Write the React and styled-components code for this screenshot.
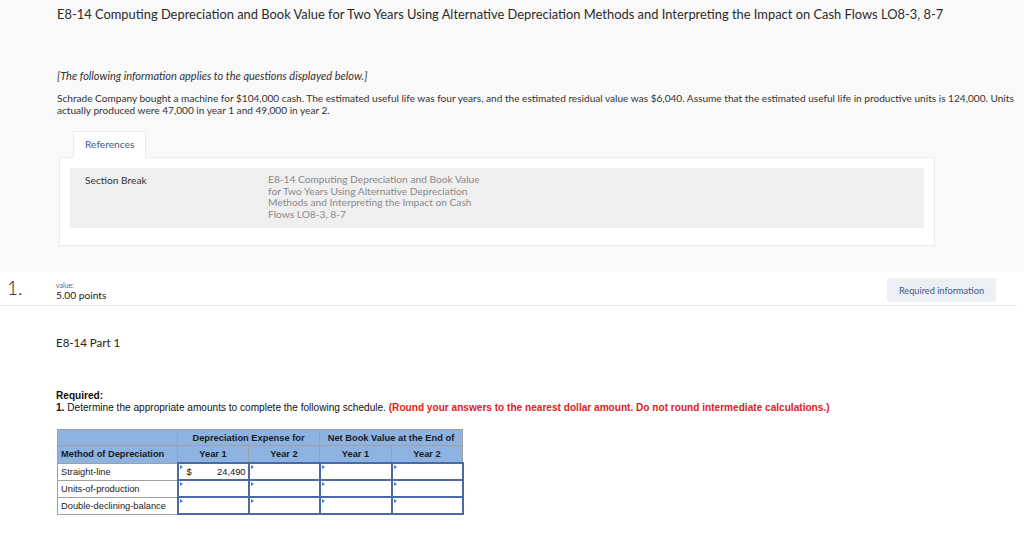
import React from "react";
import styled, { createGlobalStyle } from "styled-components";

const GlobalStyle = createGlobalStyle`
  html, body {
    margin: 0;
    padding: 0;
    background: #ffffff;
    font-family: "Lato", "Open Sans", sans-serif;
    color: #333333;
  }
`;

const Page = styled.div`
  width: 1024px;
  height: 533px;
  overflow: hidden;
  background: #ffffff;
`;

const TopArea = styled.div`
  background: #f9f9f9;
  padding: 5px 0 26px 57px;
`;

const Title = styled.h1`
  margin: 0;
  font-size: 12.9px;
  line-height: 18px;
  font-weight: 400;
  color: #2b2b2b;
  white-space: nowrap;
`;

const Note = styled.p`
  margin: 47px 0 0 0;
  font-size: 11px;
  line-height: 12px;
  font-style: italic;
  color: #333;
`;

const Intro = styled.p`
  margin: 10px 0 0 0;
  font-size: 10.1px;
  line-height: 12px;
  color: #333;
  padding-right: 0;
`;

const RefBlock = styled.div`
  margin: 15px 0 0 2px;
  width: 876px;
`;

const Tab = styled.div`
  display: inline-block;
  margin-left: 14px;
  padding: 0 11px;
  height: 26px;
  line-height: 24px;
  background: #ffffff;
  border: 1px solid #ececec;
  border-bottom: none;
  font-size: 10.2px;
  color: #3d5a8f;
  position: relative;
  z-index: 1;
  margin-bottom: -1px;
  vertical-align: top;
`;

const Panel = styled.div`
  background: #ffffff;
  border: 1px solid #ececec;
  padding: 10px 10px 17px 10px;
`;

const SectionBox = styled.div`
  background: #efefef;
  display: grid;
  grid-template-columns: 183px 214px;
  padding: 6px 15px 7px 15px;
  min-height: 47px;
`;

const SectionLabel = styled.div`
  font-size: 10.2px;
  line-height: 12px;
  color: #333;
`;

const SectionText = styled.div`
  font-size: 10.2px;
  line-height: 11.7px;
  color: #8a8a8a;
`;

const QuestionRow = styled.div`
  display: flex;
  align-items: flex-start;
  height: 33px;
  border-bottom: 1px solid #ececec;
  margin-right: 7px;
`;

const Number = styled.div`
  width: 49px;
  padding: 5px 0 0 7px;
  font-size: 19px;
  line-height: 22px;
  font-weight: 300;
  color: #222;
`;

const ValueBox = styled.div`
  padding-top: 9px;
  flex: 1;
`;

const ValueLabel = styled.div`
  font-size: 7px;
  line-height: 8px;
  color: #666;
`;

const Points = styled.div`
  font-size: 10.2px;
  line-height: 12px;
  color: #222;
`;

const InfoButton = styled.button`
  margin: 6px 21px 0 0;
  width: 109px;
  height: 24px;
  border: none;
  border-radius: 2px;
  background: #eceff4;
  color: #3d5a8f;
  font-family: "Lato", "Open Sans", sans-serif;
  font-size: 9.2px;
  padding: 0;
`;

const Body = styled.div`
  padding-left: 56px;
`;

const PartTitle = styled.h2`
  margin: 30px 0 0 0;
  font-size: 11.5px;
  line-height: 14px;
  font-weight: 400;
  color: #222;
`;

const Required = styled.div`
  margin-top: 40px;
  font-family: "Liberation Sans", Arial, sans-serif;
  font-size: 10.1px;
  line-height: 12px;
  color: #111;
`;

const Strong = styled.div`
  font-weight: 700;
`;

const Red = styled.span`
  color: #e3211b;
  font-weight: 700;
`;

const Table = styled.table`
  margin-top: 15px;
  margin-left: 1px;
  width: 405px;
  table-layout: fixed;
  border-collapse: collapse;
  font-family: "Liberation Sans", Arial, sans-serif;
  font-size: 9.3px;
  color: #111;
`;

const Col = styled.col`
  width: ${(p) => p.$w}px;
`;

const Head = styled.th`
  background: #8db3e2;
  border: 1px solid #a0a0a0;
  height: ${(p) => p.$h || 15}px;
  padding: 0 3px;
  font-weight: 700;
  text-align: ${(p) => (p.$left ? "left" : "center")};
  color: #1a1a1a;
  white-space: nowrap;
`;

const Label = styled.td`
  border: 1px solid #a0a0a0;
  height: 16px;
  padding: 0 3px;
  white-space: nowrap;
  color: #222;
`;

const InputCell = styled.td`
  border: 2px solid #4a6aa3;
  height: 14px;
  padding: 0;
  position: relative;
  background: #fff;
`;

const Marker = styled.span`
  position: absolute;
  top: 1px;
  left: 1px;
  width: 0;
  height: 0;
  border-top: 2px solid transparent;
  border-bottom: 2px solid transparent;
  border-left: 3px solid #4a7bd0;
`;

const Amount = styled.div`
  display: flex;
  justify-content: space-between;
  padding: 0 2px 0 8px;
  line-height: 14px;
`;

const rows = ["Straight-line", "Units-of-production", "Double-declining-balance"];

export default function App() {
  return (
    <Page>
      <GlobalStyle />
      <TopArea>
        <Title>
          E8-14 Computing Depreciation and Book Value for Two Years Using Alternative Depreciation
          Methods and Interpreting the Impact on Cash Flows LO8-3, 8-7
        </Title>
        <Note>[The following information applies to the questions displayed below.]</Note>
        <Intro>
          Schrade Company bought a machine for $104,000 cash. The estimated useful life was four
          years, and the estimated residual value was $6,040. Assume that the estimated useful life
          in productive units is 124,000. Units actually produced were 47,000 in year 1 and 49,000
          in year 2.
        </Intro>
        <RefBlock>
          <Tab>References</Tab>
          <Panel>
            <SectionBox>
              <SectionLabel>Section Break</SectionLabel>
              <SectionText>
                E8-14 Computing Depreciation and Book Value for Two Years Using Alternative
                Depreciation Methods and Interpreting the Impact on Cash Flows LO8-3, 8-7
              </SectionText>
            </SectionBox>
          </Panel>
        </RefBlock>
      </TopArea>

      <QuestionRow>
        <Number>1.</Number>
        <ValueBox>
          <ValueLabel>value:</ValueLabel>
          <Points>5.00 points</Points>
        </ValueBox>
        <InfoButton>Required information</InfoButton>
      </QuestionRow>

      <Body>
        <PartTitle>E8-14 Part 1</PartTitle>
        <Required>
          <Strong>Required:</Strong>
          <div>
            <b>1.</b> Determine the appropriate amounts to complete the following schedule.{" "}
            <Red>
              (Round your answers to the nearest dollar amount. Do not round intermediate
              calculations.)
            </Red>
          </div>
        </Required>
        <Table>
          <colgroup>
            <Col $w={120} />
            <Col $w={71} />
            <Col $w={71} />
            <Col $w={72} />
            <Col $w={71} />
          </colgroup>
          <thead>
            <tr>
              <Head></Head>
              <Head colSpan={2}>Depreciation Expense for</Head>
              <Head colSpan={2}>Net Book Value at the End of</Head>
            </tr>
            <tr>
              <Head $left $h={16}>Method of Depreciation</Head>
              <Head $h={16}>Year 1</Head>
              <Head $h={16}>Year 2</Head>
              <Head $h={16}>Year 1</Head>
              <Head $h={16}>Year 2</Head>
            </tr>
          </thead>
          <tbody>
            {rows.map((r, i) => (
              <tr key={r}>
                <Label>{r}</Label>
                {[0, 1, 2, 3].map((c) => (
                  <InputCell key={c}>
                    <Marker />
                    {i === 0 && c === 0 ? (
                      <Amount>
                        <span>$</span>
                        <span>24,490</span>
                      </Amount>
                    ) : null}
                  </InputCell>
                ))}
              </tr>
            ))}
          </tbody>
        </Table>
      </Body>
    </Page>
  );
}
